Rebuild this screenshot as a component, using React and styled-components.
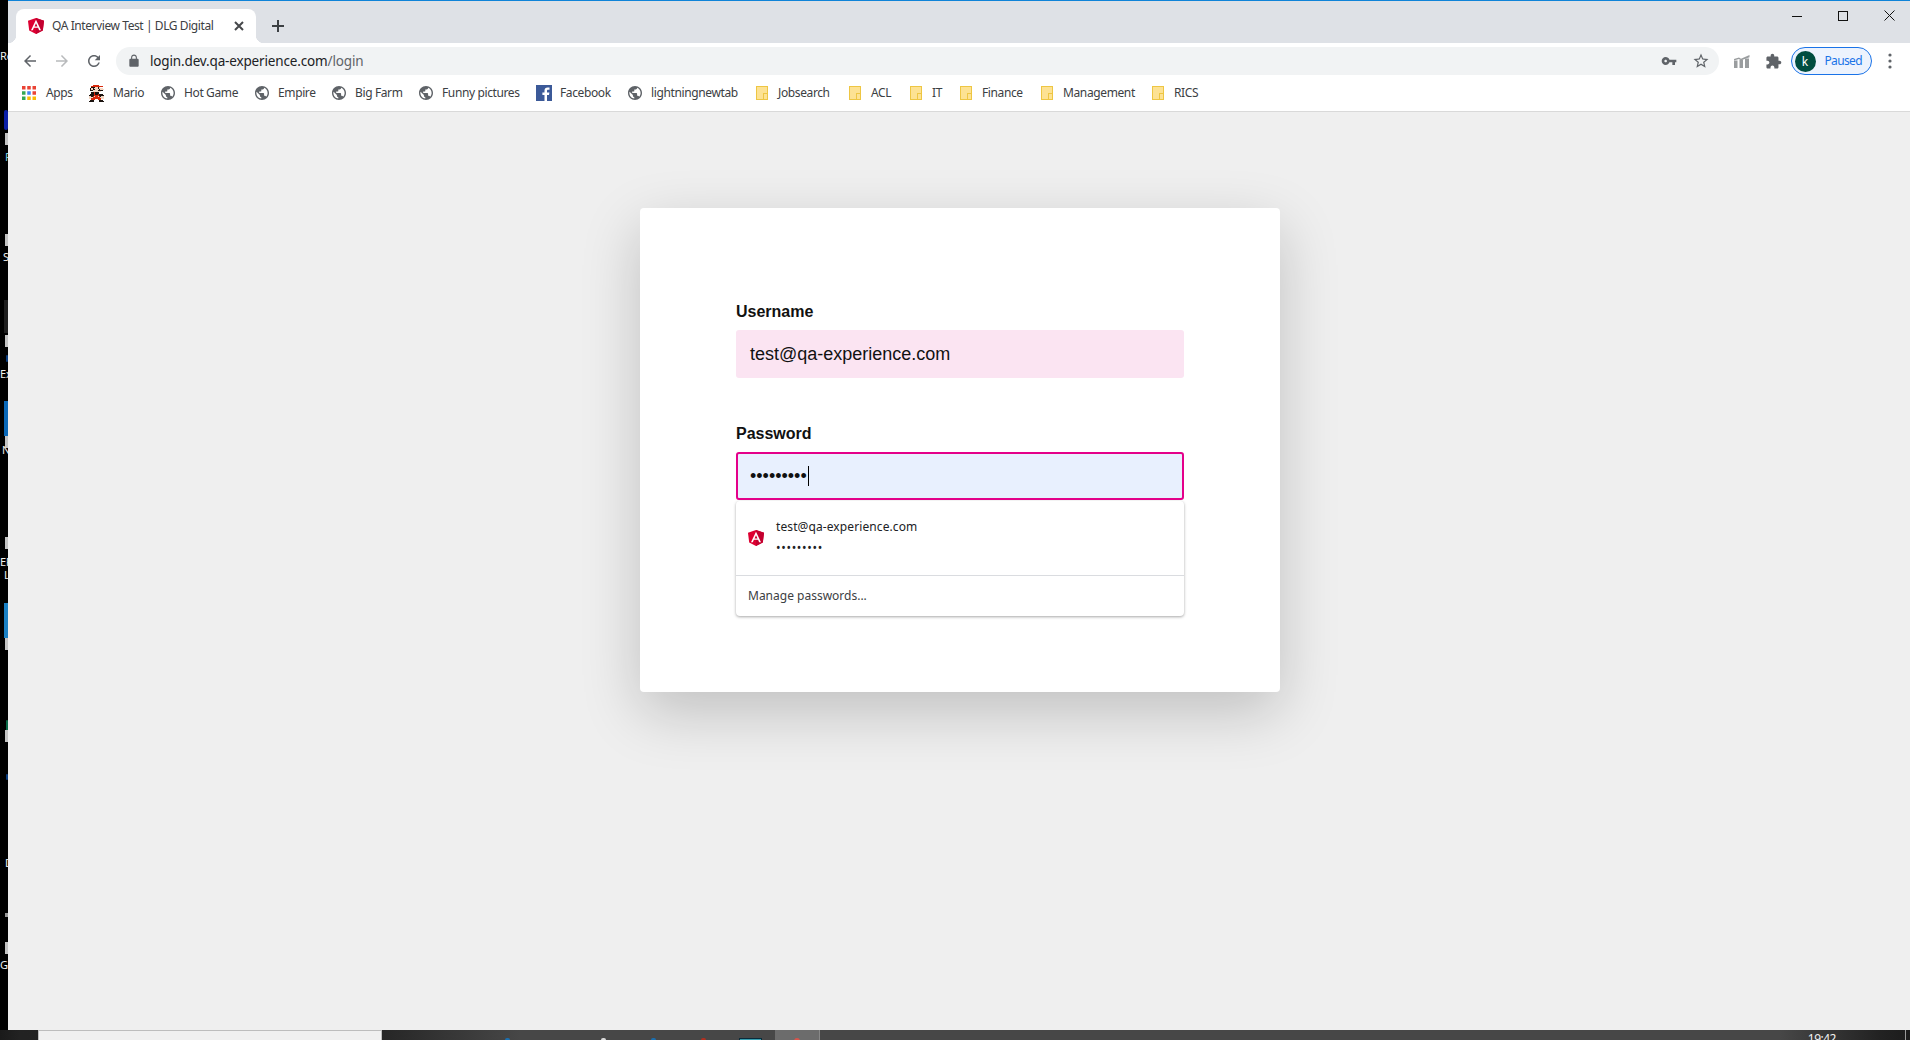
import React from "react";
import styled, { createGlobalStyle } from "styled-components";

const Global = createGlobalStyle`
  html, body { margin: 0; padding: 0; background: #fff; overflow: hidden; }
  * { box-sizing: border-box; }
`;

const UI = `"Noto Sans", "Open Sans", sans-serif`;
const WEB = `"Liberation Sans", Arial, sans-serif`;

const Screen = styled.div`
  width: 1910px;
  height: 1040px;
  display: flex;
  flex-direction: column;
  overflow: hidden;
`;
const Upper = styled.div`
  height: 1030px;
  display: flex;
`;
const Strip = styled.div`
  position: relative;
  width: 8px;
  flex: none;
  background: #000;
  overflow: hidden;
`;
const DeskTile = styled.div`
  position: absolute;
  left: 5px;
  width: 3px;
  height: 12px;
  top: ${(p) => p.$top}px;
  background: #c4c4c4;
`;
const DeskBar = styled.div`
  position: absolute;
  left: ${(p) => p.$left ?? 4}px;
  right: 0;
  top: ${(p) => p.$top}px;
  height: ${(p) => p.$h}px;
  background: ${(p) => p.$color};
  border-radius: ${(p) => p.$round || 0}px;
`;
const DeskLabel = styled.div`
  position: absolute;
  left: ${(p) => p.$left ?? 0}px;
  top: ${(p) => p.$top}px;
  font: 11px/12px ${UI};
  color: ${(p) => p.$color || "#f0f0f0"};
  white-space: nowrap;
`;

const Browser = styled.div`
  flex: 1;
  min-width: 0;
  display: flex;
  flex-direction: column;
  overflow: hidden;
`;
const TabStrip = styled.div`
  height: 43px;
  flex: none;
  background: #dee1e6;
  border-top: 1px solid #0f83d8;
  padding: 8px 0 0 8px;
  display: flex;
  align-items: flex-start;
`;
const Tab = styled.div`
  position: relative;
  width: 240px;
  height: 34px;
  background: #fff;
  border-radius: 8px 8px 0 0;
  padding: 0 12px;
  display: flex;
  align-items: center;
  gap: 8px;
  &::before, &::after {
    content: "";
    position: absolute;
    bottom: 0;
    width: 8px;
    height: 8px;
  }
  &::before { left: -8px; background: radial-gradient(circle at 0 0, transparent 8px, #fff 8.5px); }
  &::after { right: -8px; background: radial-gradient(circle at 100% 0, transparent 8px, #fff 8.5px); }
`;
const TabTitle = styled.span`
  flex: 1;
  font: 12px/16px ${UI};
  color: #3c4043;
  white-space: nowrap;
  letter-spacing: -0.42px;
`;
const NewTab = styled.div`
  margin: 10px 0 0 15px;
  width: 14px;
  height: 14px;
  display: flex;
`;
const WindowControls = styled.div`
  margin: -8px -2px 0 auto;
  display: flex;
`;
const WindowButton = styled.div`
  width: 46px;
  height: 29px;
  display: flex;
  align-items: center;
  justify-content: center;
`;

const Toolbar = styled.div`
  height: 36px;
  flex: none;
  background: #fff;
  padding: 4px 6px 4px 8px;
  display: flex;
  align-items: center;
  gap: 4px;
`;
const ToolButton = styled.div`
  width: 28px;
  height: 28px;
  flex: none;
  display: flex;
  align-items: center;
  justify-content: center;
`;
const PuzzleButton = styled(ToolButton)`
  padding-right: 2px;
`;
const AddressBar = styled.div`
  flex: 1;
  height: 28px;
  margin: 0 5px 0 4px;
  background: #f1f3f4;
  border-radius: 14px;
  padding: 0 9px 0 11px;
  display: flex;
  align-items: center;
`;
const Url = styled.div`
  flex: 1;
  margin-left: 9px;
  font: 13.5px/18px ${UI};
  color: #202124;
  white-space: nowrap;
  letter-spacing: -0.15px;
`;
const UrlPath = styled.span`
  color: #5f6368;
`;
const KeyIcon = styled.div`
  display: flex;
  margin-right: 15px;
`;
const ProfilePill = styled.div`
  width: 81px;
  height: 28px;
  flex: none;
  margin-left: -1px;
  border: 1.5px solid #1a73e8;
  border-radius: 14px;
  background: #edf3fd;
  padding-left: 2.5px;
  display: flex;
  align-items: center;
  gap: 9px;
`;
const Avatar = styled.div`
  width: 21px;
  height: 21px;
  border-radius: 50%;
  background: #004d40;
  color: #fff;
  font: 12px/21px ${UI};
  text-align: center;
`;
const PausedText = styled.span`
  font: 12px/16px ${UI};
  color: #1a73e8;
  letter-spacing: -0.65px;
`;

const BookmarkBar = styled.div`
  height: 33px;
  flex: none;
  background: #fff;
  border-bottom: 1px solid #d9d9d9;
  padding: 0 0 4px 14px;
  display: flex;
  align-items: center;
`;
const Bookmark = styled.div`
  width: ${(p) => p.$w}px;
  flex: none;
  display: flex;
  align-items: center;
  gap: ${(p) => p.$gap ?? 9}px;
  font: 12px/16px ${UI};
  color: #3c4043;
  white-space: nowrap;
  letter-spacing: -0.38px;
`;
const IconBox = styled.div`
  width: ${(p) => p.$w || 14}px;
  height: ${(p) => p.$h || 14}px;
  flex: none;
  display: flex;
`;
const Folder = styled.div`
  position: relative;
  width: 12px;
  height: 14px;
  flex: none;
  margin-right: 1px;
  background: #fde293;
  border: 1px solid #eec643;
  &::after {
    content: "";
    position: absolute;
    right: -1px;
    bottom: -1px;
    width: 3px;
    height: 5px;
    border: 1px solid #eec643;
    background: #fde293;
  }
`;

const Page = styled.main`
  flex: 1;
  background: #efefef;
  padding: 96px 0 0 2px;
  display: flex;
  justify-content: center;
  align-items: flex-start;
`;
const Card = styled.div`
  width: 640px;
  height: 484px;
  background: #fff;
  border-radius: 4px;
  padding: 95px 96px 0;
  box-shadow: 0 20px 60px rgba(0, 0, 0, 0.2);
`;
const Field = styled.div`
  margin-bottom: 47px;
`;
const Label = styled.div`
  font: bold 16px/18px ${WEB};
  color: #111;
  margin-bottom: 9px;
`;
const InputWrap = styled.div`
  position: relative;
`;
const Input = styled.div`
  height: 48px;
  border-radius: 3px;
  display: flex;
  align-items: center;
  background: ${(p) => (p.$focused ? "#e8f0fe" : "#fbe4f2")};
  border: ${(p) => (p.$focused ? "2px solid #e4008a" : "none")};
  padding: 0 14px 1px ${(p) => (p.$focused ? 12 : 14)}px;
  font: 18px/24px ${WEB};
  color: #111;
`;
const Caret = styled.span`
  width: 1px;
  height: 20px;
  margin-left: 1px;
  background: #000;
`;
const Dropdown = styled.div`
  position: absolute;
  top: calc(100% + 1px);
  left: 0;
  right: 0;
  height: 115px;
  background: #fff;
  border-radius: 4px;
  box-shadow: 0 1px 3px rgba(0, 0, 0, 0.35);
  display: flex;
  flex-direction: column;
  font-family: ${UI};
  color: #202124;
`;
const Suggestion = styled.div`
  height: 75px;
  flex: none;
  border-bottom: 1px solid #dadce0;
  padding: 0 12px 1px 12px;
  display: flex;
  align-items: center;
  gap: 12px;
`;
const SuggestionLines = styled.div`
  display: flex;
  flex-direction: column;
  gap: 5px;
  font-size: 12px;
  line-height: 16px;
  letter-spacing: 0.1px;
`;
const SuggestionDots = styled.span`
  letter-spacing: 0.7px;
  font-size: 12px;
`;
const Manage = styled.div`
  flex: 1;
  padding: 0 12px 1px;
  display: flex;
  align-items: center;
  font-size: 12px;
  color: #3c4043;
`;

const Taskbar = styled.div`
  height: 10px;
  flex: none;
  display: flex;
  overflow: hidden;
  background: linear-gradient(90deg, #1a1a1a 0, #222 20px, #262626 382px, #474747 520px, #474747 1780px, #222 1880px, #1c1c1c 1910px);
`;
const SearchBox = styled.div`
  width: 344px;
  margin-left: 38px;
  background: #f0f0f0;
  border-top: 1px solid #bdbdbd;
  border-left: 1px solid #bdbdbd;
  border-right: 1px solid #bdbdbd;
`;
const TaskGlyph = styled.div`
  width: ${(p) => p.$w}px;
  height: 6px;
  margin: ${(p) => p.$t}px 0 0 ${(p) => p.$ml}px;
  background: ${(p) => p.$color};
  border-radius: ${(p) => p.$r || 0}px;
  border: ${(p) => p.$border || "none"};
`;
const TaskActive = styled.div`
  width: 45px;
  margin-left: 13px;
  background: #6c6c6c;
  border-right: 1px solid #888;
  display: flex;
  justify-content: center;
  padding-top: 8px;
`;
const Clock = styled.div`
  margin: 2px 0 0 auto;
  font: 12px/14px ${UI};
  color: #f2f2f2;
  letter-spacing: -0.5px;
`;
const EdgeLine = styled.div`
  width: 1px;
  margin: 0 4px 0 69px;
  background: #999;
`;

const I = ({ d, size = 18, color = "#5f6368", box = "0 0 24 24" }) => (
  <svg width={size} height={size} viewBox={box} fill={color}>
    <path d={d} />
  </svg>
);

const ARROW = "M20 11H7.83l5.59-5.59L12 4l-8 8 8 8 1.41-1.41L7.83 13H20v-2z";
const ARROW_R = "M4 11h12.17l-5.59-5.59L12 4l8 8-8 8-1.41-1.41L16.17 13H4v-2z";
const RELOAD = "M17.65 6.35C16.2 4.9 14.21 4 12 4c-4.42 0-7.99 3.58-7.99 8s3.57 8 7.99 8c3.73 0 6.84-2.55 7.73-6h-2.08c-.82 2.33-3.04 4-5.65 4-3.31 0-6-2.69-6-6s2.69-6 6-6c1.66 0 3.14.69 4.22 1.78L13 11h7V4l-2.35 2.35z";
const LOCK = "M18 8h-1V6c0-2.76-2.24-5-5-5S7 3.24 7 6v2H6c-1.1 0-2 .9-2 2v10c0 1.1.9 2 2 2h12c1.1 0 2-.9 2-2V10c0-1.1-.9-2-2-2zm-2.9 0H8.9V6c0-1.71 1.39-3.1 3.1-3.1 1.71 0 3.1 1.39 3.1 3.1v2z";
const KEY = "M12.65 10C11.83 7.67 9.61 6 7 6c-3.31 0-6 2.69-6 6s2.69 6 6 6c2.61 0 4.83-1.67 5.65-4H17v4h4v-4h2v-4H12.65zM7 14c-1.1 0-2-.9-2-2s.9-2 2-2 2 .9 2 2-.9 2-2 2z";
const STAR = "M22 9.24l-7.19-.62L12 2 9.19 8.63 2 9.24l5.46 4.73L5.82 21 12 17.27 18.18 21l-1.63-7.03L22 9.24zM12 15.4l-3.76 2.27 1-4.28-3.32-2.88 4.38-.38L12 6.1l1.71 4.04 4.38.38-3.32 2.88 1 4.28L12 15.4z";
const PUZZLE = "M20.5 11H19V7c0-1.1-.9-2-2-2h-4V3.5C13 2.12 11.88 1 10.5 1S8 2.12 8 3.5V5H4c-1.1 0-1.99.9-1.99 2v3.8H3.5c1.49 0 2.7 1.21 2.7 2.7s-1.21 2.7-2.7 2.7H2V20c0 1.1.9 2 2 2h3.8v-1.5c0-1.49 1.21-2.7 2.7-2.7 1.49 0 2.7 1.21 2.7 2.7V22H17c1.1 0 2-.9 2-2v-4h1.5c1.38 0 2.5-1.12 2.5-2.5S21.88 11 20.5 11z";
const GLOBE = "M12 2C6.48 2 2 6.48 2 12s4.48 10 10 10 10-4.48 10-10S17.52 2 12 2zm-1 17.93c-3.95-.49-7-3.85-7-7.93 0-.62.08-1.21.21-1.79L9 15v1c0 1.1.9 2 2 2v1.93zm6.9-2.54c-.26-.81-1-1.39-1.9-1.39h-1v-3c0-.55-.45-1-1-1H8v-2h2c.55 0 1-.45 1-1V7h2c1.1 0 2-.9 2-2v-.41c2.93 1.19 5 4.06 5 7.41 0 2.08-.8 3.97-2.1 5.39z";

const Angular = ({ size = 16 }) => (
  <svg width={size} height={size} viewBox="32 30 186 200" preserveAspectRatio="none">
    <polygon fill="#DD0031" points="125,30 31.9,63.2 46.1,186.3 125,230 203.9,186.3 218.1,63.2" />
    <polygon fill="#C3002F" points="125,30 125,230 203.9,186.3 218.1,63.2" />
    <path fill="#fff" d="M125 52.1L66.8 182.6h21.7l11.7-29.2h49.4l11.7 29.2h21.7L125 52.1zM142 135.4h-34l17-40.9 17 40.9z" />
  </svg>
);

const AppsIcon = () => {
  const c = ["#ea4335", "#ea4335", "#ea4335", "#34a853", "#4285f4", "#ea4335", "#34a853", "#fbbc05", "#fbbc05"];
  return (
    <svg width="14" height="14" viewBox="0 0 14 14">
      {c.map((f, i) => (
        <rect key={i} x={(i % 3) * 5.25} y={Math.floor(i / 3) * 5.25} width="3.5" height="3.5" fill={f} />
      ))}
    </svg>
  );
};

const MARIO = [
  "....RRRRR.......",
  "...RRRRRRRRR....",
  "...KKKWWKW......",
  "..KWKWWWKWWW....",
  "..KWKKWWWKWWW...",
  "..KKWWWWKKKK....",
  "....WWWWWWW.....",
  "...KKRKKK.......",
  "..KKKRKKRKKK....",
  ".KKKKRRRRKKKK...",
  ".WWKRWRRWRKWW...",
  ".WWWRRRRRRWWW...",
  ".WWRRRRRRRRWW...",
  "...RRR..RRR.....",
  "..KKK....KKK....",
  ".KKKK....KKKK...",
];
const MARIO_FILL = { R: "#d8280c", K: "#1c1410", W: "#f4d8c4" };
const MarioIcon = () => (
  <svg width="17" height="17" viewBox="1 0 13 16" preserveAspectRatio="none" shapeRendering="crispEdges">
    {MARIO.flatMap((row, y) =>
      row.split("").map((ch, x) =>
        ch === "." ? null : <rect key={`${x}-${y}`} x={x} y={y} width="1" height="1" fill={MARIO_FILL[ch]} />
      )
    )}
  </svg>
);

const FacebookIcon = () => (
  <svg width="16" height="16" viewBox="0 0 16 16">
    <rect width="16" height="16" fill="#3b5998" />
    <path fill="#fff" d="M11 16V10h2l.4-2.5H11V6c0-.8.3-1.2 1.2-1.2h1.3V2.6c-.4 0-1.1-.1-1.9-.1-1.9 0-3.1 1.1-3.1 3.2v1.8H6.4V10h2.1v6H11z" />
  </svg>
);

const ChartIcon = () => (
  <svg width="16" height="13" viewBox="0 0 16 13" fill="#9a9d9f">
    <path d="M0 5.5h3.5V13H0zM5.5 4.5H9V13H5.5zM11 3.5h4V13h-4z" />
    <path d="M0 4L5 2.5l2 1.2L15.5 0v2.2L7.2 5.2 5 4 0 5.5z" />
  </svg>
);

const Globe = () => (
  <IconBox>
    <I d={GLOBE} size={14} box="2 2 20 20" />
  </IconBox>
);

const folders = [
  ["Jobsearch", 93],
  ["ACL", 61],
  ["IT", 50],
  ["Finance", 81],
  ["Management", 111],
  ["RICS", 60],
];
const sites = [
  ["Hot Game", 94],
  ["Empire", 77],
  ["Big Farm", 87],
  ["Funny pictures", 117],
];

export default function App() {
  return (
    <Screen>
      <Global />
      <Upper>
        <Strip>
          <DeskLabel $top={50}>Re</DeskLabel>
          <DeskBar $top={110} $h={20} $color="#0b1fa8" $round={6} />
          <DeskTile $top={133} />
          <DeskLabel $left={5} $top={151} $color="#7fd0e0">F</DeskLabel>
          <DeskTile $top={234} />
          <DeskLabel $left={3} $top={251}>S</DeskLabel>
          <DeskBar $top={300} $h={33} $color="#1f1f1f" />
          <DeskTile $top={335} />
          <DeskBar $left={6} $top={355} $h={7} $color="#0a3d80" $round={3} />
          <DeskLabel $top={368}>Ex</DeskLabel>
          <DeskBar $top={401} $h={35} $color="#0a68b8" />
          <DeskTile $top={436} />
          <DeskLabel $left={2} $top={444}>N</DeskLabel>
          <DeskTile $top={537} />
          <DeskLabel $top={556}>EF</DeskLabel>
          <DeskLabel $left={4} $top={569}>L</DeskLabel>
          <DeskBar $top={603} $h={35} $color="#1a80c4" />
          <DeskTile $top={638} />
          <DeskBar $left={6} $top={720} $h={15} $color="#0a6a48" $round={3} />
          <DeskTile $top={730} />
          <DeskBar $left={6} $top={774} $h={6} $color="#0a3d80" $round={3} />
          <DeskLabel $left={5} $top={857}>D</DeskLabel>
          <DeskBar $left={5} $top={913} $h={4} $color="#999" />
          <DeskTile $top={942} />
          <DeskLabel $top={959}>Gi</DeskLabel>
        </Strip>
        <Browser>
          <TabStrip>
            <Tab>
              <Angular />
              <TabTitle>QA Interview Test | DLG Digital</TabTitle>
              <svg width="10" height="10" viewBox="0 0 10 10" stroke="#45474a" strokeWidth="2">
                <path d="M1 1l8 8M9 1l-8 8" />
              </svg>
            </Tab>
            <NewTab>
              <svg width="14" height="14" viewBox="0 0 14 14" stroke="#3c4043" strokeWidth="2">
                <path d="M7 1v12M1 7h12" />
              </svg>
            </NewTab>
            <WindowControls>
              <WindowButton>
                <svg width="10" height="10" viewBox="0 0 10 10" stroke="#111" strokeWidth="1">
                  <path d="M0 5.5h10" />
                </svg>
              </WindowButton>
              <WindowButton>
                <svg width="10" height="10" viewBox="0 0 10 10" fill="none" stroke="#111" strokeWidth="1">
                  <rect x="0.5" y="0.5" width="9" height="9" />
                </svg>
              </WindowButton>
              <WindowButton>
                <svg width="11" height="11" viewBox="0 0 11 11" stroke="#111" strokeWidth="1">
                  <path d="M0.5 0.5l10 10M10.5 0.5l-10 10" />
                </svg>
              </WindowButton>
            </WindowControls>
          </TabStrip>
          <Toolbar>
            <ToolButton><I d={ARROW} /></ToolButton>
            <ToolButton><I d={ARROW_R} color="#b8babc" /></ToolButton>
            <ToolButton><I d={RELOAD} /></ToolButton>
            <AddressBar>
              <I d={LOCK} size={14} />
              <Url>login.dev.qa-experience.com<UrlPath>/login</UrlPath></Url>
              <KeyIcon><I d={KEY} size={16} /></KeyIcon>
              <I d={STAR} size={18} />
            </AddressBar>
            <ToolButton><ChartIcon /></ToolButton>
            <PuzzleButton><I d={PUZZLE} size={17} /></PuzzleButton>
            <ProfilePill>
              <Avatar>k</Avatar>
              <PausedText>Paused</PausedText>
            </ProfilePill>
            <ToolButton>
              <svg width="4" height="16" viewBox="0 0 4 16" fill="#5f6368">
                <circle cx="2" cy="2" r="1.6" />
                <circle cx="2" cy="8" r="1.6" />
                <circle cx="2" cy="14" r="1.6" />
              </svg>
            </ToolButton>
          </Toolbar>
          <BookmarkBar>
            <Bookmark $w={67} $gap={10}><IconBox><AppsIcon /></IconBox>Apps</Bookmark>
            <Bookmark $w={72} $gap={8}><IconBox $w={16} $h={17}><MarioIcon /></IconBox>Mario</Bookmark>
            {sites.map(([t, w]) => (
              <Bookmark key={t} $w={w}><Globe />{t}</Bookmark>
            ))}
            <Bookmark $w={92} $gap={8}><IconBox $w={16} $h={16}><FacebookIcon /></IconBox>Facebook</Bookmark>
            <Bookmark $w={128}><Globe />lightningnewtab</Bookmark>
            {folders.map(([t, w]) => (
              <Bookmark key={t} $w={w}><Folder />{t}</Bookmark>
            ))}
          </BookmarkBar>
          <Page>
            <Card>
              <Field>
                <Label>Username</Label>
                <Input>test@qa-experience.com</Input>
              </Field>
              <Field>
                <Label>Password</Label>
                <InputWrap>
                  <Input $focused>•••••••••<Caret /></Input>
                  <Dropdown>
                    <Suggestion>
                      <Angular />
                      <SuggestionLines>
                        <span>test@qa-experience.com</span>
                        <SuggestionDots>•••••••••</SuggestionDots>
                      </SuggestionLines>
                    </Suggestion>
                    <Manage>Manage passwords...</Manage>
                  </Dropdown>
                </InputWrap>
              </Field>
            </Card>
          </Page>
        </Browser>
      </Upper>
      <Taskbar>
        <SearchBox />
        <TaskGlyph $w={5} $t={8} $ml={123} $color="#1a6fb0" $r={2} />
        <TaskGlyph $w={5} $t={8} $ml={91} $color="#d8d8d8" $r={2} />
        <TaskGlyph $w={5} $t={8} $ml={45} $color="#1a6fb0" $r={2} />
        <TaskGlyph $w={5} $t={8} $ml={45} $color="#b03020" $r={2} />
        <TaskGlyph $w={23} $t={8} $ml={33} $color="#3aa0b0" $border="1px solid #0a2a3a" />
        <TaskActive>
          <TaskGlyph $w={6} $t={0} $ml={0} $color="#d9534a" $r={3} />
        </TaskActive>
        <Clock>19:42</Clock>
        <EdgeLine />
      </Taskbar>
    </Screen>
  );
}
